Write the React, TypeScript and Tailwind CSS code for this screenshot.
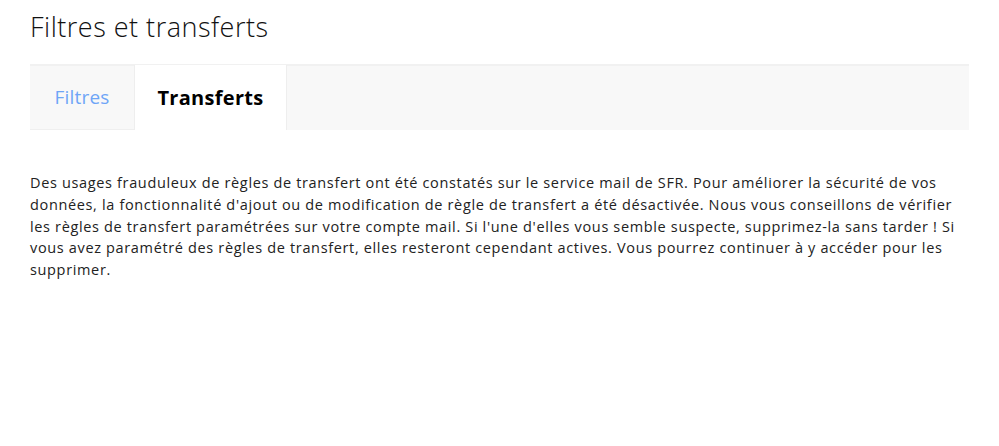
import * as React from 'react'

const font = { fontFamily: '"Open Sans", "Noto Sans", sans-serif' }

function Tabs() {
  return (
    <div className="flex h-[66px] border-t-2 border-[#f1f1f1] bg-[#f8f8f8]">
      <button className="h-full w-[104px] border-b border-[#efefef] text-center text-[19px] tracking-[0.2px] text-[#6ea5f7]">
        Filtres
      </button>
      <button className="-mt-px h-[65px] w-[153px] border-x border-[#eeeeee] bg-white text-center text-[20px] font-bold tracking-[0.3px] text-black">
        Transferts
      </button>
    </div>
  )
}

export default function App() {
  return (
    <div className="min-h-[446px] bg-white px-[30px] pt-[8px]" style={font}>
      <h1 className="text-[27px] font-light leading-[38px] tracking-[0.5px] text-[#111]">
        Filtres et transferts
      </h1>
      <div className="mt-[18px]">
        <Tabs />
      </div>
      <p className="mt-[42px] text-[14.5px] leading-[21.8px] tracking-[0.65px] text-[#222]">
        Des usages frauduleux de règles de transfert ont été constatés sur le service mail de
        SFR. Pour améliorer la sécurité de vos données, la fonctionnalité d'ajout ou de
        modification de règle de transfert a été désactivée. Nous vous conseillons de vérifier
        les règles de transfert paramétrées sur votre compte mail. Si l'une d'elles vous semble
        suspecte, supprimez-la sans tarder ! Si vous avez paramétré des règles de transfert,
        elles resteront cependant actives. Vous pourrez continuer à y accéder pour les
        supprimer.
      </p>
    </div>
  )
}
